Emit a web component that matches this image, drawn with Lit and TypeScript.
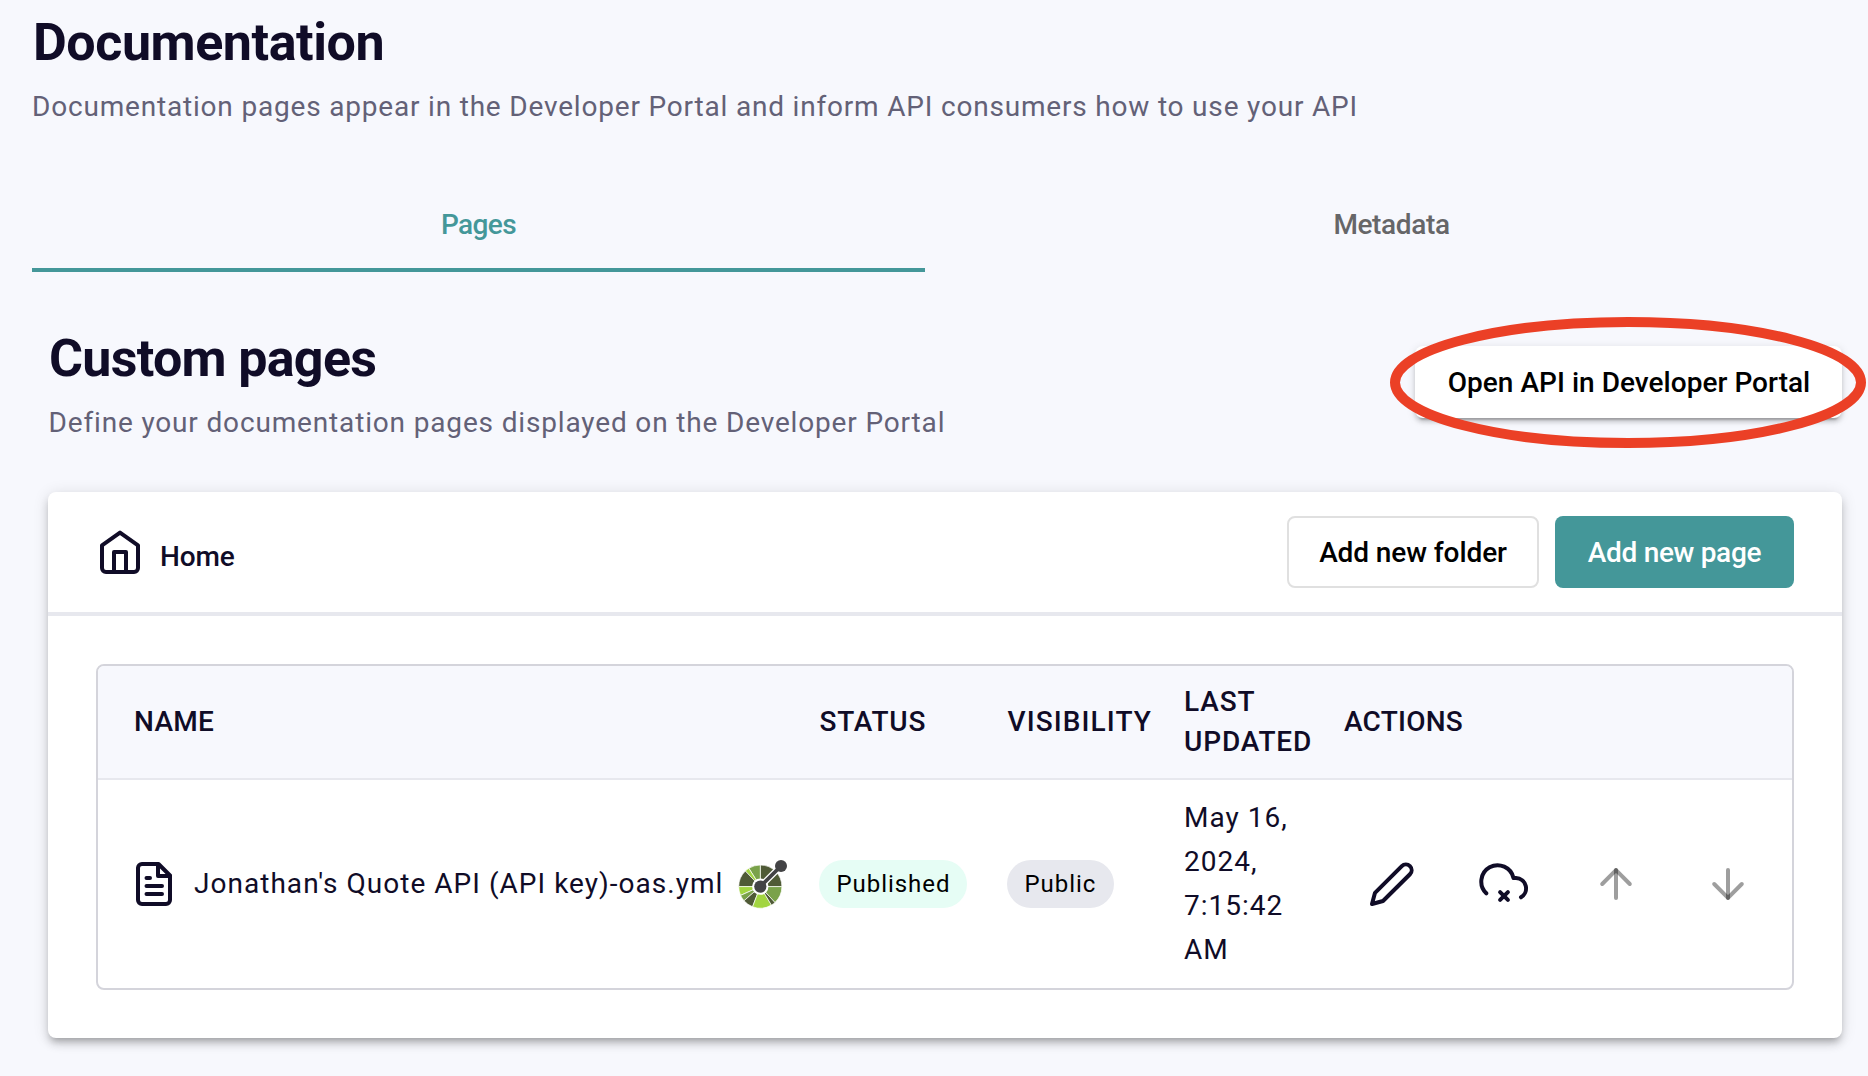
import { LitElement, html, svg, css } from "lit";
import { customElement } from "lit/decorators.js";

const DARK = "#4f5a36";
const MID = "#7aa24a";
const LIME = "#a2d541";

// Disc segments of the OpenAPI logo: start angle, end angle, colour.
const SEGMENTS: [number, number, string][] = [
  [0, 45, DARK],
  [45, 90, DARK],
  [90, 122, MID],
  [122, 134, LIME],
  [134, 180, DARK],
  [180, 204, LIME],
  [204, 221, MID],
  [221, 249, DARK],
  [249, 301, LIME],
  [301, 313, DARK],
  [313, 360, MID],
];

function wedge(from: number, to: number): string {
  const cx = 21.3;
  const cy = 26.6;
  const r = 21.6;
  const at = (deg: number) => {
    const a = (deg * Math.PI) / 180;
    return `${(cx + r * Math.cos(a)).toFixed(2)} ${(cy - r * Math.sin(a)).toFixed(2)}`;
  };
  return `M${cx} ${cy}L${at(from)}A${r} ${r} 0 0 0 ${at(to)}Z`;
}

const homeIcon = html`<svg class="icon" viewBox="0 0 48 48">
  <path d="M6 17.4 24 4.6l18 12.8V40a4 4 0 0 1-4 4H10a4 4 0 0 1-4-4Z" />
  <path d="M18 44V24h12v20" />
</svg>`;

const fileIcon = html`<svg class="icon" viewBox="0 0 48 48">
  <path d="M28.5 4H12a4 4 0 0 0-4 4v32a4 4 0 0 0 4 4h24a4 4 0 0 0 4-4V15.5Z" />
  <path d="M28 4.5V16h12M16.5 18H20M16.5 26H32M16.5 34H32" />
</svg>`;

const pencilIcon = html`<svg class="icon" viewBox="0 0 48 48">
  <path d="M4 44 7 32.8 33.8 6.1a5.75 5.75 0 0 1 8.15 8.15L15 41Z" />
</svg>`;

const cloudIcon = html`<svg class="icon" viewBox="0 0 48 48">
  <path d="M6.3 33.3A16.3 16.3 0 1 1 33.5 18H36a10.4 10.4 0 0 1 5 19.3" />
  <path d="M20.1 32.1l7.8 7.8M27.9 32.1l-7.8 7.8" />
</svg>`;

const upIcon = html`<svg class="icon disabled" viewBox="0 0 48 48">
  <path d="M24 38V10" /><path d="M10.2 24 24 10.2 37.8 24" />
</svg>`;

const downIcon = html`<svg class="icon disabled" viewBox="0 0 48 48">
  <path d="M24 10v28" /><path d="M10.2 24 24 37.8 37.8 24" />
</svg>`;

const openApiLogo = html`<svg class="logo" viewBox="0 0 48 48">
  ${SEGMENTS.map(([a, b, c]) => svg`<path d=${wedge(a, b)} fill=${c} stroke="#fff" stroke-width=".7" />`)}
  <circle cx="21.3" cy="26.6" r="8.2" fill="#fff" />
  <path d="M21.3 26.6 42 6" stroke="#fff" stroke-width="6.4" />
  <path d="M21.3 26.6 42 6" stroke="#434345" stroke-width="3.8" />
  <circle cx="21.3" cy="26.6" r="6.1" fill="#434345" />
  <circle cx="42" cy="6" r="6" fill="#434345" />
</svg>`;

@customElement("app-root")
export class AppRoot extends LitElement {
  static styles = css`
    :host {
      display: block;
      box-sizing: border-box;
      height: 1076px;
      padding: 13px 26px 0 32px;
      overflow: hidden;
      background: #f7f8fd;
      color: #100c27;
      font: 400 28px/44px Roboto, "Liberation Sans", sans-serif;
    }
    * { box-sizing: border-box; }
    h1, h2, p { margin: 0; }
    h1, h2 { padding-left: 1px; font-size: 52px; line-height: 60px; font-weight: 700; }
    h1 { letter-spacing: -0.44px; }
    h2 { letter-spacing: -0.7px; }
    .sub { color: #636177; white-space: nowrap; }
    .page-sub { margin-top: 12px; letter-spacing: 0.81px; }
    .section-sub { margin-top: 12px; padding-left: 0.5px; letter-spacing: 0.84px; }
    .tabs { display: grid; grid-template-columns: 893px 933px; width: 1826px; margin-top: 63px; }
    .tab {
      height: 80px;
      padding-top: 17px;
      border-bottom: 4px solid transparent;
      text-align: center;
      line-height: 32px;
      font-weight: 500;
      color: #666668;
      letter-spacing: -0.37px;
    }
    .tab.active { color: #449799; border-color: #449799; letter-spacing: -0.62px; }
    .section-head {
      display: flex;
      justify-content: space-between;
      align-items: flex-start;
      margin-top: 57px;
      padding: 0 0 0 16px;
    }
    .open-wrap { position: relative; margin-top: 17px; }
    .ring { position: absolute; left: -25px; top: -29px; width: 476px; height: 131px; fill: none; stroke: #eb4026; stroke-width: 10; }
    button {
      display: block;
      height: 72px;
      padding: 0;
      border: 0;
      border-radius: 8px;
      background: #fff;
      color: #000;
      font: 500 28px/74px Roboto, "Liberation Sans", sans-serif;
      white-space: nowrap;
      text-align: center;
    }
    .open {
      width: 427px;
      padding-left: 1px;
      letter-spacing: 0.03px;
      box-shadow: 0 6px 2px -4px rgba(0, 0, 0, 0.2), 0 4px 4px 0 rgba(0, 0, 0, 0.14), 0 2px 10px 0 rgba(0, 0, 0, 0.12);
    }
    .folder { width: 252px; border: 2px solid #e0e0e0; line-height: 70px; letter-spacing: -0.09px; }
    .page { width: 239px; background: #449799; color: #fff; letter-spacing: -0.32px; }
    .card {
      width: 1794px;
      height: 546px;
      margin: 47px 0 0 16px;
      border-radius: 8px;
      background: #fff;
      box-shadow: 0 6px 6px -4px rgba(0, 0, 0, 0.2), 0 6px 8px 0 rgba(0, 0, 0, 0.14), 0 2px 16px 0 rgba(0, 0, 0, 0.12);
    }
    .card-head {
      display: flex;
      align-items: flex-start;
      gap: 16px;
      height: 124px;
      padding: 24px 48px 0;
      border-bottom: 4px solid #e7e8ee;
    }
    .crumb { display: flex; flex: 1; gap: 16px; padding-top: 12px; font-weight: 500; }
    .crumb span { padding-top: 7px; line-height: 44px; letter-spacing: -0.1px; }
    .icon, .logo { display: block; flex: none; width: 48px; height: 48px; overflow: visible; fill: none; }
    .icon { stroke: #100c27; stroke-width: 4; stroke-linecap: round; stroke-linejoin: round; }
    .icon.disabled path { stroke: rgba(0, 0, 0, 0.38); }
    .table { margin: 48px 48px 0; border: 2px solid #d4d4db; border-radius: 8px; overflow: hidden; }
    .row { display: grid; grid-template-columns: 721px 188px 177px 160px 1fr; align-items: center; height: 208px; }
    .head { height: 114px; background: #f7f8fd; border-bottom: 2px solid #e7e8ee; font-weight: 500; line-height: 40px; }
    .h-name { padding-left: 36px; letter-spacing: 0.3px; }
    .h-status { padding-left: 0.5px; letter-spacing: 0.79px; }
    .h-vis { padding-left: 0.5px; letter-spacing: 1.1px; }
    .h-last { letter-spacing: 0.85px; }
    .h-actions { letter-spacing: 0.23px; }
    .name { display: flex; align-items: center; padding-left: 32px; letter-spacing: 1.03px; white-space: nowrap; }
    .name span { width: 545px; padding-left: 16px; }
    .name .logo { margin-left: 16px; }
    .chip { width: 148px; height: 48px; border-radius: 24px; background: #e6fdf5; color: #000; font-size: 24px; line-height: 48px; letter-spacing: 0.95px; padding-left: 17.5px; }
    .chip.public { width: 107px; background: #e7e8ee; }
    .date { letter-spacing: 1px; white-space: nowrap; }
    .actions { display: flex; gap: 64px; padding-left: 24px; }
  `;

  render() {
    return html`
      <h1>Documentation</h1>
      <p class="sub page-sub">Documentation pages appear in the Developer Portal and inform API consumers how to use your API</p>
      <nav class="tabs">
        <div class="tab active">Pages</div>
        <div class="tab">Metadata</div>
      </nav>
      <div class="section-head">
        <div>
          <h2>Custom pages</h2>
          <p class="sub section-sub">Define your documentation pages displayed on the Developer Portal</p>
        </div>
        <div class="open-wrap">
          <button class="open">Open API in Developer Portal</button>
          <svg class="ring" viewBox="0 0 476 131"><ellipse cx="238" cy="65.5" rx="233" ry="60.5" /></svg>
        </div>
      </div>
      <section class="card">
        <header class="card-head">
          <div class="crumb">${homeIcon}<span>Home</span></div>
          <button class="folder">Add new folder</button>
          <button class="page">Add new page</button>
        </header>
        <div class="table">
          <div class="row head">
            <div class="h-name">NAME</div>
            <div class="h-status">STATUS</div>
            <div class="h-vis">VISIBILITY</div>
            <div class="h-last">LAST<br />UPDATED</div>
            <div class="h-actions">ACTIONS</div>
          </div>
          <div class="row">
            <div class="name">${fileIcon}<span>Jonathan's Quote API (API key)-oas.yml</span>${openApiLogo}</div>
            <div class="chip">Published</div>
            <div class="chip public">Public</div>
            <div class="date">May 16,<br />2024,<br />7:15:42<br />AM</div>
            <div class="actions">${pencilIcon}${cloudIcon}${upIcon}${downIcon}</div>
          </div>
        </div>
      </section>
    `;
  }
}
